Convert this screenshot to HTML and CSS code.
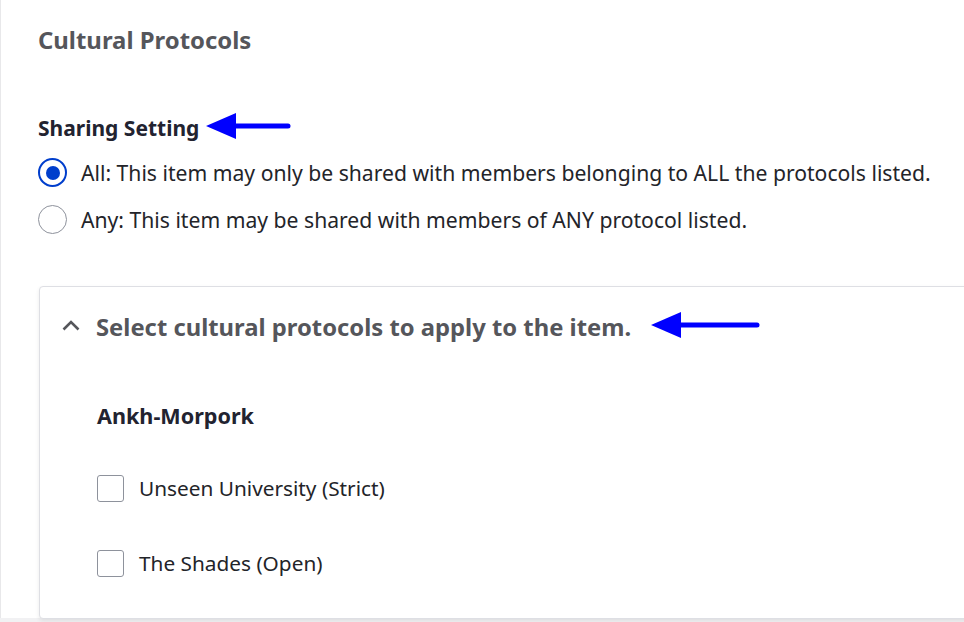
FILE: index.html
```html
<!DOCTYPE html>
<html>
<head>
<meta charset="utf-8">
<link rel="stylesheet" href="styles.css">
</head>
<body>
<div class="page">
  <h2 class="title">Cultural Protocols</h2>
  <div class="label-row">
    <span class="field-label">Sharing Setting</span>
    <svg class="arrow arrow-1" width="86" height="28" viewBox="0 0 86 28">
      <polygon points="0,14 30,1 30,27" fill="#0000ff"/>
      <line x1="28" y1="14" x2="82" y2="14" stroke="#0000ff" stroke-width="5" stroke-linecap="round"/>
    </svg>
  </div>
  <div class="radios">
    <label class="radio-row"><span class="radio checked"></span><span class="radio-text">All: This item may only be shared with members belonging to ALL the protocols listed.</span></label>
    <label class="radio-row"><span class="radio"></span><span class="radio-text">Any: This item may be shared with members of ANY protocol listed.</span></label>
  </div>
  <div class="card">
    <div class="card-head">
      <svg class="chevron" width="18" height="12" viewBox="0 0 18 12">
        <polyline points="1.5,10.5 9,3 16.5,10.5" fill="none" stroke="#55565b" stroke-width="2.6"/>
      </svg>
      <span class="card-title">Select cultural protocols to apply to the item.</span>
      <svg class="arrow arrow-2" width="110" height="28" viewBox="0 0 110 28">
        <polygon points="0,14 30,1 30,27" fill="#0000ff"/>
        <line x1="28" y1="14" x2="106" y2="14" stroke="#0000ff" stroke-width="5" stroke-linecap="round"/>
      </svg>
    </div>
    <div class="card-body">
      <div class="group-title">Ankh-Morpork</div>
      <label class="check-row"><span class="checkbox"></span><span class="check-text">Unseen University (Strict)</span></label>
      <label class="check-row"><span class="checkbox"></span><span class="check-text">The Shades (Open)</span></label>
    </div>
  </div>
</div>
</body>
</html>
```

FILE: styles.css
```css
html, body {
  margin: 0;
  padding: 0;
  background: #f1f1f3;
}
body {
  font-family: "Noto Sans", "Open Sans", sans-serif;
  color: #232429;
  width: 964px;
  height: 622px;
  overflow: hidden;
}
.page {
  background: #fff;
  border-left: 1px solid #e8e8ea;
  padding: 24px 0 0 37px;
  height: 618px;
  box-sizing: border-box;
  overflow: visible;
}
.title {
  margin: 0;
  font-size: 23.9px;
  line-height: 32px;
  font-weight: 700;
  color: #55565b;
}
.label-row {
  display: flex;
  align-items: center;
  margin-top: 57px;
  height: 30px;
}
.field-label {
  font-size: 21px;
  line-height: 30px;
  font-weight: 700;
  color: #222330;
}
.arrow-1 {
  margin-left: 7px;
  margin-top: -4px;
}
.radios {
  display: flex;
  flex-direction: column;
  gap: 18px;
  margin-top: 15px;
}
.radio-row {
  display: flex;
  align-items: center;
  gap: 14px;
  height: 29px;
}
.radio {
  width: 29px;
  height: 29px;
  box-sizing: border-box;
  border-radius: 50%;
  border: 1.5px solid #8e929c;
  background: #fff;
  flex: none;
  position: relative;
}
.radio.checked {
  border: 2.5px solid #003ecc;
}
.radio.checked::after {
  content: "";
  position: absolute;
  left: 50%;
  top: 50%;
  width: 14px;
  height: 14px;
  margin: -7px 0 0 -7px;
  border-radius: 50%;
  background: #003ecc;
}
.radio-text {
  font-size: 21.15px;
  line-height: 29px;
  color: #232429;
}
.card {
  margin-top: 52px;
  margin-left: 1px;
  margin-right: -20px;
  border: 1px solid #dedfe4;
  border-radius: 4px;
  box-shadow: 0 2px 4px rgba(0,0,0,0.08);
  background: #fff;
  height: 333px;
  box-sizing: border-box;
}
.card-head {
  display: flex;
  align-items: center;
  padding: 22px 0 0 22px;
  height: 36px;
}
.chevron {
  margin-right: 16px;
  margin-top: -4px;
}
.card-title {
  font-size: 23.8px;
  line-height: 36px;
  font-weight: 700;
  color: #55565b;
}
.arrow-2 {
  margin-left: 20px;
  margin-top: -4px;
}
.card-body {
  padding: 0 0 0 57px;
}
.group-title {
  margin-top: 53px;
  font-size: 21.6px;
  font-weight: 700;
  color: #222330;
  line-height: 36px;
}
.check-row {
  display: flex;
  align-items: center;
  gap: 15px;
  margin-top: 41px;
  height: 27px;
}
.check-row + .check-row {
  margin-top: 48px;
}
.checkbox {
  width: 27px;
  height: 27px;
  box-sizing: border-box;
  border: 1.5px solid #8e929c;
  border-radius: 3px;
  flex: none;
  background: #fff;
}
.check-text {
  font-size: 20.8px;
  line-height: 27px;
  color: #232429;
}
```
